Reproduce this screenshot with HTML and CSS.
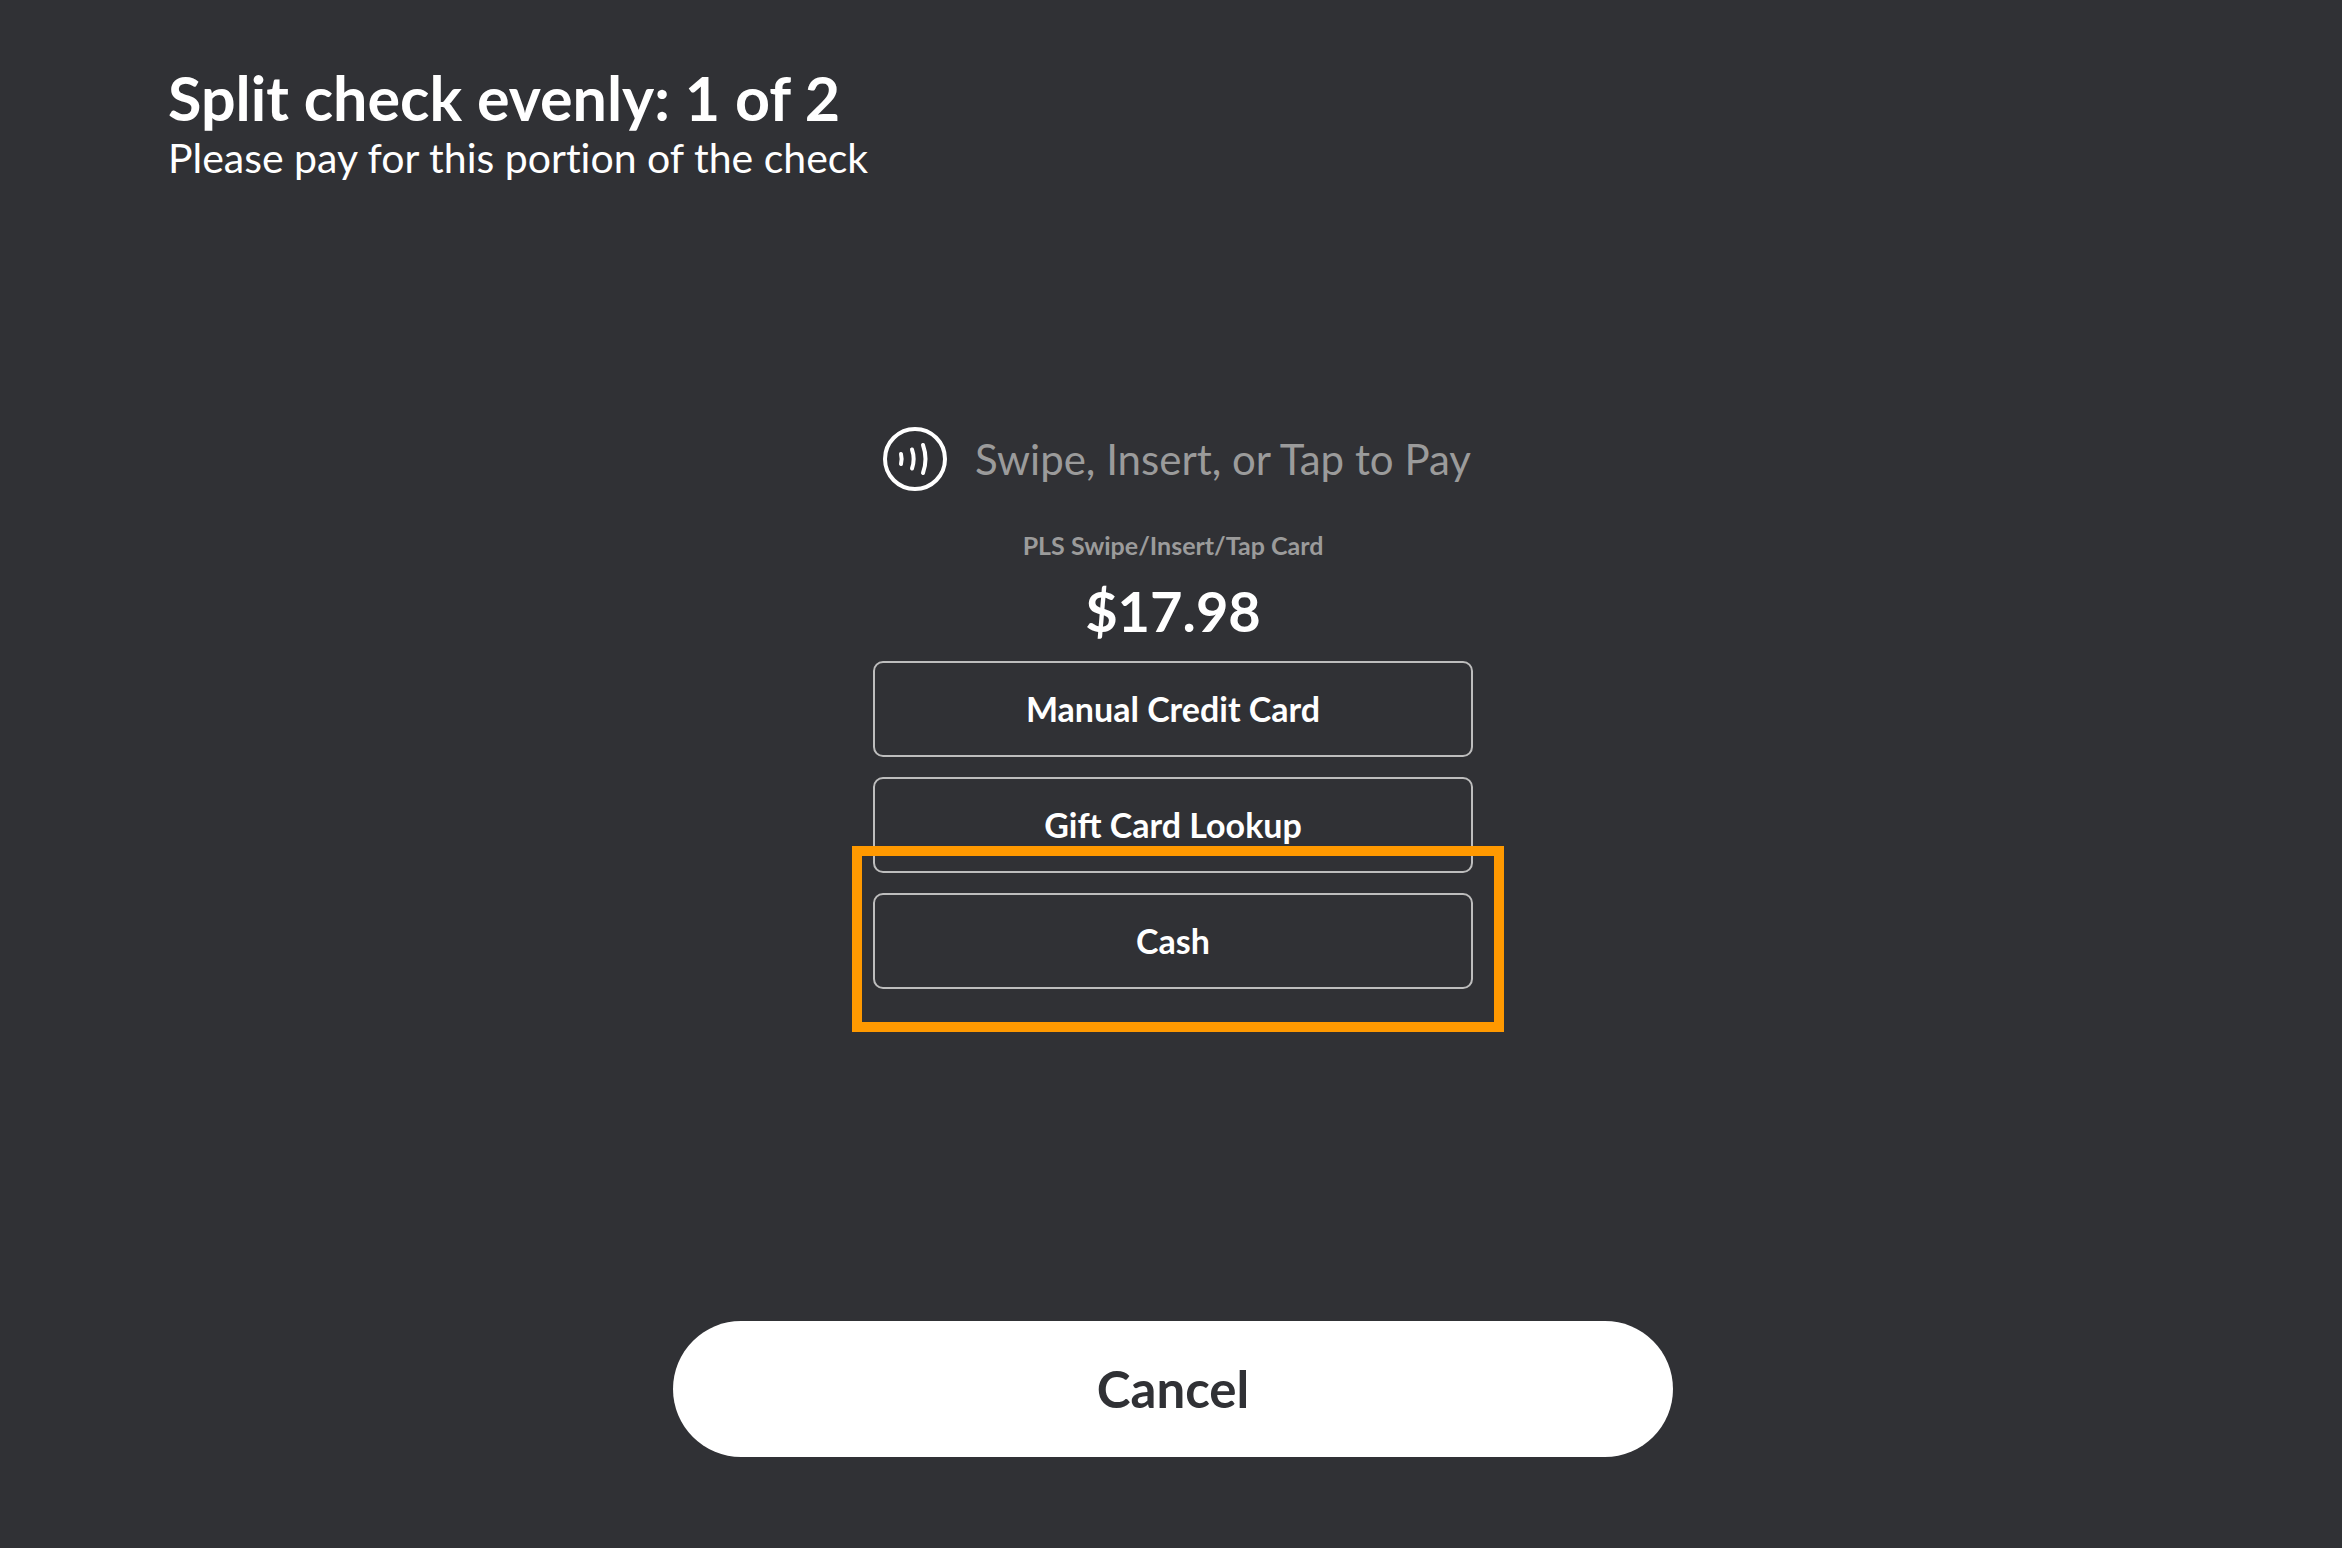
FILE: index.html
```html
<!DOCTYPE html>
<html lang="en">
<head>
<meta charset="utf-8">
<meta name="viewport" content="width=device-width, initial-scale=1">
<title>Split check</title>
<link rel="stylesheet" href="styles.css">
</head>
<body>
<main class="screen">
  <header class="header">
    <h1 class="title">Split check evenly: 1 of 2</h1>
    <p class="subtitle">Please pay for this portion of the check</p>
  </header>
  <section class="payment">
    <div class="prompt">
      <svg class="prompt-icon" viewBox="0 0 64 64" aria-hidden="true" fill="none" stroke="currentColor" stroke-width="4" stroke-linecap="round">
        <circle cx="32" cy="32" r="30"/>
        <path d="M18 27Q19.300 32 18 37M29 22.500Q32.300 32 29 41.500M40 18Q45 32 40 46"/>
      </svg>
      <p class="prompt-text">Swipe, Insert, or Tap to Pay</p>
    </div>
    <p class="reader-status">PLS Swipe/Insert/Tap Card</p>
    <p class="amount">$17.98</p>
    <div class="methods">
      <button class="method" type="button">Manual Credit Card</button>
      <button class="method" type="button">Gift Card Lookup</button>
      <button class="method method-highlighted" type="button">Cash</button>
    </div>
  </section>
  <footer class="footer">
    <button class="cancel" type="button">Cancel</button>
  </footer>
</main>
</body>
</html>
```
FILE: styles.css
```css
* {
  box-sizing: border-box;
}

body {
  margin: 0;
  background: #303135;
  color: #fff;
  font-family: Lato, "Open Sans", sans-serif;
}

h1,
p {
  margin: 0;
}

button {
  font-family: inherit;
  cursor: pointer;
}

.screen {
  display: flex;
  flex-direction: column;
  min-height: 100vh;
  padding: 60px 164px 91px 168px;
}

.title {
  font-size: 61px;
  font-weight: 700;
  line-height: 76px;
}

.subtitle {
  font-size: 41px;
  font-variant-ligatures: none;
  line-height: 44px;
}

.payment {
  display: flex;
  flex: 1;
  flex-direction: column;
  align-items: center;
  justify-content: center;
  padding-bottom: 85px;
}

.prompt {
  display: flex;
  align-items: center;
  gap: 28px;
  padding-left: 8px;
}

.prompt-icon {
  width: 64px;
  height: 64px;
}

.prompt-text {
  color: #9b9b9b;
  font-size: 42px;
  line-height: 64px;
}

.reader-status {
  margin-top: 38px;
  color: #9b9b9b;
  font-size: 25px;
  font-weight: 700;
  line-height: 32px;
}

.amount {
  margin-top: 14px;
  font-size: 56px;
  font-weight: 700;
  line-height: 72px;
}

.methods {
  display: flex;
  flex-direction: column;
  gap: 20px;
  width: 100%;
  max-width: 600px;
  margin-top: 14px;
}

.method {
  position: relative;
  padding: 28px 24px;
  border: 2px solid #bdbdbd;
  border-radius: 10px;
  background: transparent;
  color: #fff;
  font-size: 34px;
  font-weight: 700;
  line-height: 36px;
}

.method-highlighted::after {
  content: "";
  position: absolute;
  inset: -49px -33px -45px -23px;
  border: 10px solid #ff9900;
  pointer-events: none;
}

.footer {
  display: flex;
  justify-content: center;
}

.cancel {
  width: 100%;
  max-width: 1000px;
  padding: 38px 48px;
  border: 0;
  border-radius: 68px;
  background: #fff;
  color: #303135;
  font-size: 51px;
  font-weight: 700;
  line-height: 60px;
}
```
